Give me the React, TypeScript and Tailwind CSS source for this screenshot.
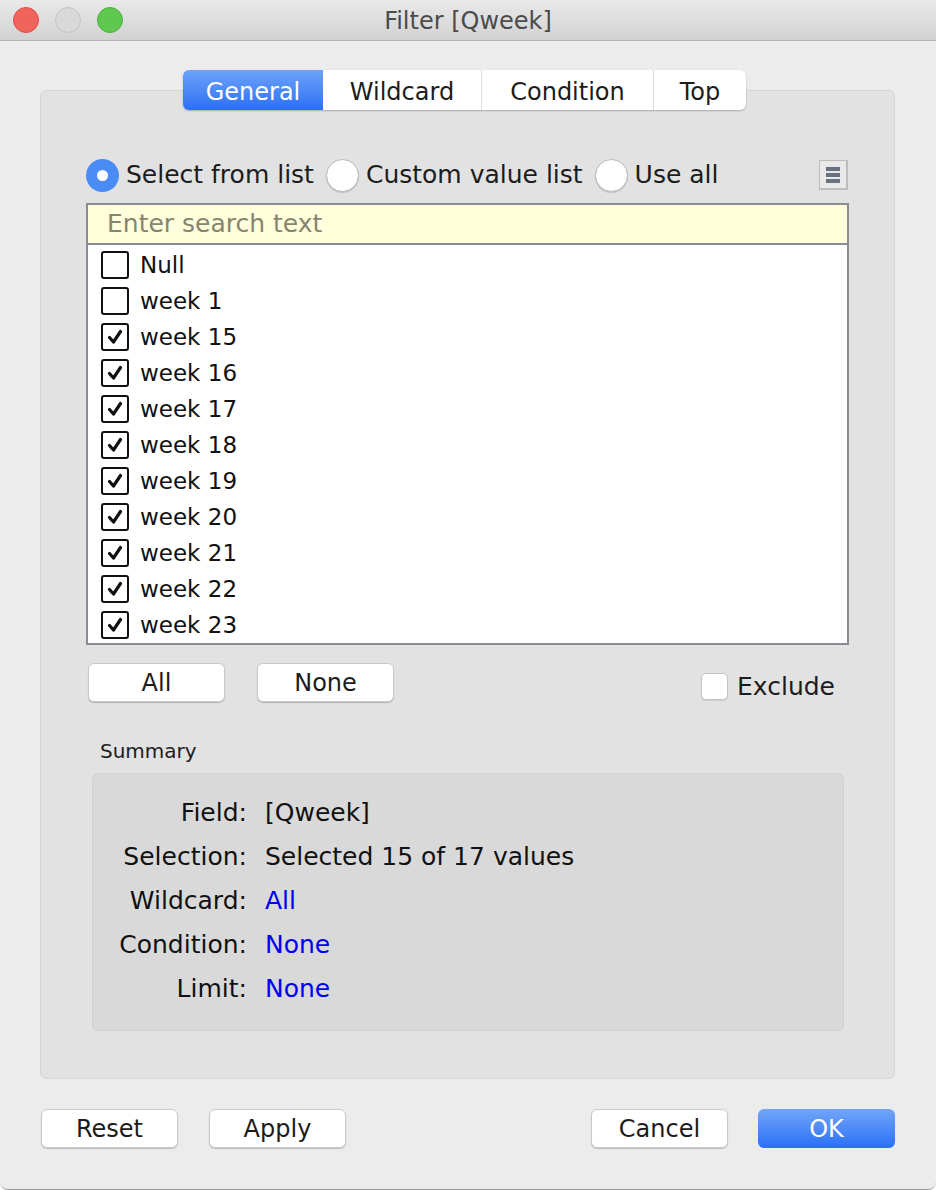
import { useState } from "react";

const weeks = [
  { label: "Null", checked: false },
  { label: "week 1", checked: false },
  { label: "week 15", checked: true },
  { label: "week 16", checked: true },
  { label: "week 17", checked: true },
  { label: "week 18", checked: true },
  { label: "week 19", checked: true },
  { label: "week 20", checked: true },
  { label: "week 21", checked: true },
  { label: "week 22", checked: true },
  { label: "week 23", checked: true },
];

const tabs = [
  { name: "General", w: "w-[140px]" },
  { name: "Wildcard", w: "w-[158px]" },
  { name: "Condition", w: "w-[172px]" },
  { name: "Top", w: "w-[93px]" },
];

const summary = [
  { k: "Field:", v: "[Qweek]", link: false },
  { k: "Selection:", v: "Selected 15 of 17 values", link: false },
  { k: "Wildcard:", v: "All", link: true },
  { k: "Condition:", v: "None", link: true },
  { k: "Limit:", v: "None", link: true },
];

const Check = ({ on }: { on: boolean }) => (
  <div className="w-[28px] h-[28px] border-2 border-[#111] rounded-[3px] bg-white flex items-center justify-center">
    {on && (
      <svg width="18" height="18" viewBox="0 0 18 18">
        <path d="M3.5 9.5 L7.5 14 L14.5 3.5" fill="none" stroke="#111" strokeWidth="3.2" strokeLinecap="round" strokeLinejoin="round" />
      </svg>
    )}
  </div>
);

const Radio = ({ on }: { on: boolean }) =>
  on ? (
    <div className="w-[33px] h-[33px] rounded-full bg-[#4a8bf5] flex items-center justify-center">
      <div className="w-[11px] h-[11px] rounded-full bg-white" />
    </div>
  ) : (
    <div className="w-[33px] h-[33px] rounded-full bg-white border border-[#b9b9b9] shadow-[0_1px_1px_rgba(0,0,0,0.15)]" />
  );

const Btn = ({ label, primary }: { label: string; primary?: boolean }) => (
  <button
    className={
      primary
        ? "w-[137px] h-[39px] rounded-[6px] bg-gradient-to-b from-[#71a5f8] to-[#2a6ff6] text-white text-[24px] leading-none"
        : "w-[137px] h-[39px] rounded-[6px] bg-white border border-[#c9c9c9] shadow-[0_1px_1px_rgba(0,0,0,0.2)] text-[#1c1c1c] text-[24px] leading-none"
    }
  >
    {label}
  </button>
);

const App = () => {
  const [tab] = useState("General");
  return (
    <div className="w-[936px] h-[1190px] bg-[#ececec] flex flex-col overflow-hidden font-['DejaVu_Sans',sans-serif] rounded-b-[8px] border-b border-[#9a9a9a]">
      {/* title bar */}
      <div className="h-[41px] shrink-0 bg-gradient-to-b from-[#e9e9e9] to-[#d2d2d2] border-b border-[#b1b1b1] flex items-center relative">
        <div className="flex items-center gap-[16px] pl-[13px]">
          <div className="w-[26px] h-[26px] rounded-full bg-[#f0645c] border border-[#dc4c45]" />
          <div className="w-[26px] h-[26px] rounded-full bg-[#d9d9d9] border border-[#c4c4c4]" />
          <div className="w-[26px] h-[26px] rounded-full bg-[#5fc84f] border border-[#4aaf3c]" />
        </div>
        <div className="absolute inset-0 flex items-center justify-center pt-[2px] text-[24px] text-[#4b4b4b] pointer-events-none">
          Filter [Qweek]
        </div>
      </div>

      {/* tabs */}
      <div className="pt-[29px] flex justify-center -mb-[20px] relative z-10 pr-[7px]">
        <div className="flex h-[40px] rounded-[6px] bg-white shadow-[0_1px_2px_rgba(0,0,0,0.25)] overflow-hidden">
          {tabs.map((t, i) => (
            <div
              key={t.name}
              className={
                (t.name === tab
                  ? "bg-gradient-to-b from-[#6ea2f8] to-[#2b6ff6] text-white "
                  : "text-[#1c1c1c] " + (i > 1 ? "border-l border-[#dcdcdc] " : "")) +
                t.w +
                " flex items-center justify-center pt-[3px] text-[24px]"
              }
            >
              {t.name}
            </div>
          ))}
        </div>
      </div>

      {/* panel */}
      <div className="mx-[40px] mr-[41px] h-[989px] bg-[#e2e2e2] border border-[#d6d6d6] rounded-[6px] pt-[67px] pl-[45px] pr-[45px]">
        <div className="flex items-center h-[34px] text-[25px] text-[#1c1c1c]">
          <Radio on />
          <span className="ml-[7px] mr-[12px]">Select from list</span>
          <Radio on={false} />
          <span className="ml-[7px] mr-[12px]">Custom value list</span>
          <Radio on={false} />
          <span className="ml-[7px]">Use all</span>
          <div className="ml-auto mr-[1px] w-[29px] h-[30px] bg-[#e9e9e9] border border-[#bdbdbd] border-r-2 border-b-2 flex flex-col items-center justify-center gap-[2px]">
            <div className="w-[14px] h-[4px] bg-[#68717f]" />
            <div className="w-[14px] h-[4px] bg-[#68717f]" />
            <div className="w-[14px] h-[4px] bg-[#68717f]" />
          </div>
        </div>

        {/* list */}
        <div className="mt-[11px] w-[763px] h-[442px] border-2 border-[#898d93] bg-white">
          <div className="h-[40px] bg-[#ffffdc] border-b-2 border-[#898d93] flex items-center pl-[19px] text-[25px] text-[#85856f]">
            Enter search text
          </div>
          <div className="pt-[2px]">
            {weeks.map((w) => (
              <div key={w.label} className="h-[36px] flex items-center pl-[13px] gap-[11px] text-[23px] text-[#111]">
                <Check on={w.checked} />
                <span>{w.label}</span>
              </div>
            ))}
          </div>
        </div>

        {/* all / none / exclude */}
        <div className="mt-[15px] flex items-center pl-[2px] pr-[14px]">
          <Btn label="All" />
          <div className="w-[32px]" />
          <Btn label="None" />
          <div className="ml-auto flex items-center mt-[8px]">
            <div className="w-[27px] h-[27px] bg-white border border-[#c4c4c4] rounded-[5px] shadow-[0_1px_1px_rgba(0,0,0,0.1)]" />
            <span className="ml-[9px] text-[25px] text-[#1c1c1c]">Exclude</span>
          </div>
        </div>

        {/* summary */}
        <div className="mt-[35px] pl-[14px] text-[20px] text-[#1c1c1c] leading-none">Summary</div>
        <div className="mt-[12px] ml-[6px] w-[752px] h-[258px] bg-[#d9d9d9] border border-[#d0d0d0] rounded-[6px] pt-[17px]">
          {summary.map((s) => (
            <div key={s.k} className="h-[44px] flex items-center text-[25px]">
              <span className="w-[154px] text-right text-[#111]">{s.k}</span>
              <span className={"ml-[18px] " + (s.link ? "text-[#0000f0]" : "text-[#111]")}>{s.v}</span>
            </div>
          ))}
        </div>
      </div>

      {/* bottom buttons */}
      <div className="mt-[30px] flex items-center pl-[41px] pr-[41px]">
        <Btn label="Reset" />
        <div className="w-[31px]" />
        <Btn label="Apply" />
        <div className="ml-auto" />
        <Btn label="Cancel" />
        <div className="w-[30px]" />
        <Btn label="OK" primary />
      </div>
    </div>
  );
};

export default App;
